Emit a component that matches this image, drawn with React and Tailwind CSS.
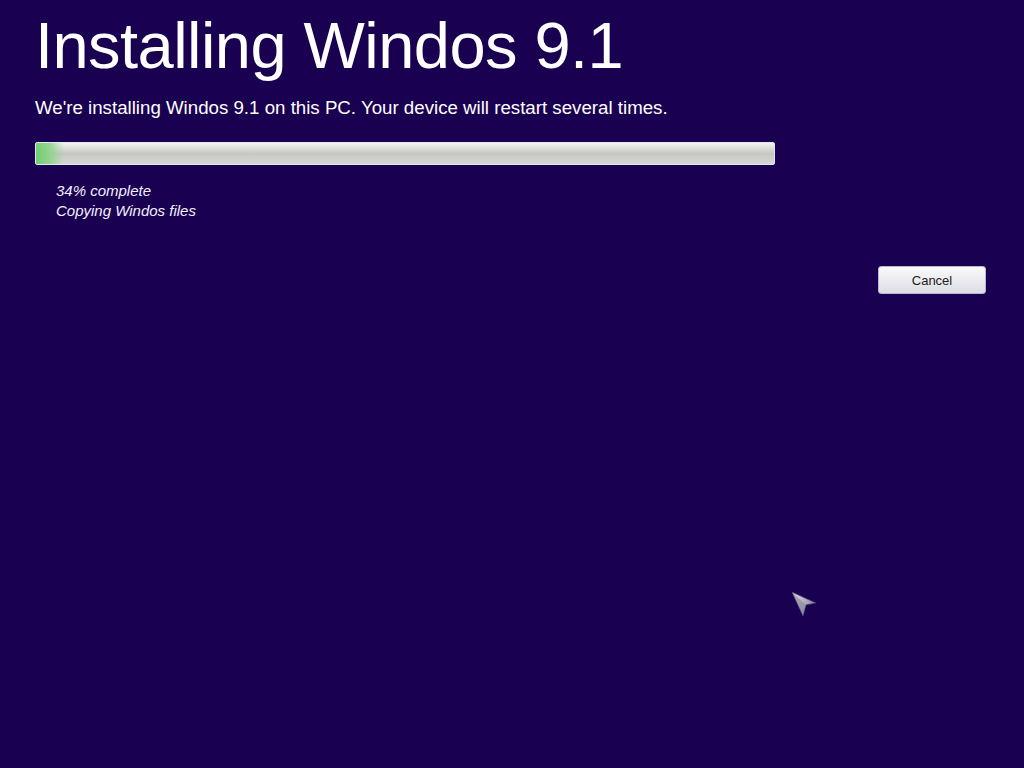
import React from 'react';

const Cursor = () => (
  <svg width="28" height="28" viewBox="0 0 28 28" className="absolute left-[790px] top-[590px]">
    <defs>
      <linearGradient id="cg" x1="0" y1="0" x2="1" y2="1">
        <stop offset="0" stopColor="#e8e6f0" />
        <stop offset="1" stopColor="#6e6a88" />
      </linearGradient>
    </defs>
    <path d="M2 2 L26 13 L16 15 L13 26 Z" fill="url(#cg)" stroke="#3a3460" strokeWidth="0.8" />
    <path d="M2 2 L16 15 L13 26 Z" fill="#8a86a4" opacity="0.6" />
  </svg>
);

export default function App() {
  return (
    <div className="relative w-[1024px] h-[768px] overflow-hidden bg-[#1a0050] text-white font-['Liberation_Sans',Arial,sans-serif]">
      <div className="pl-[35px] pt-[8px]">
        <h1 className="text-[65px] leading-[76px] tracking-[-0.55px]">Installing Windos 9.1</h1>
        <p className="mt-[13px] text-[18.7px] leading-[22px]">
          We're installing Windos 9.1 on this PC. Your device will restart several times.
        </p>

        {/* progress */}
        <div className="mt-[23px] w-[740px] h-[23px] rounded-[2px] border border-[#e6e6ee] bg-gradient-to-b from-[#f4f4f2] via-[#c6c6c2] to-[#d8d8d4] flex overflow-hidden">
          <div className="w-[28px] h-full bg-gradient-to-r from-[#66cc66] via-[#8fd48a] to-transparent opacity-90" />
        </div>

        <div className="mt-[16px] pl-[21px] italic text-[15px] leading-[20px] text-[#f4f0ff]">
          <p>34% complete</p>
          <p>Copying Windos files</p>
        </div>
      </div>

      <div className="flex justify-end pr-[38px] mt-[45px]">
        <button className="w-[108px] h-[28px] pt-[2px] rounded-[3px] border border-[#b8b8c8] bg-gradient-to-b from-[#fafafa] via-[#ececf0] to-[#dcdce6] text-[13px] text-[#1a1a1a]">
          Cancel
        </button>
      </div>

      <Cursor />
    </div>
  );
}
